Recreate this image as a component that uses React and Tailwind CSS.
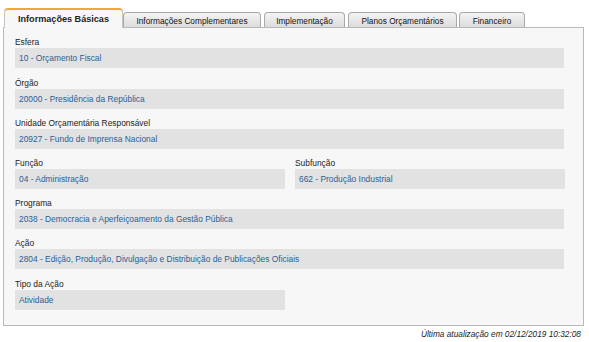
import React from 'react';

const tabs = [
  { label: 'Informações Complementares', w: 'w-[138px]', ml: 'ml-0' },
  { label: 'Implementação', w: 'w-[81px]', ml: 'ml-[3px]' },
  { label: 'Planos Orçamentários', w: 'w-[109px]', ml: 'ml-[3px]' },
  { label: 'Financeiro', w: 'w-[66px]', ml: 'ml-[2px]' },
];

// Campo: rótulo + valor em barra cinza
const Field = ({ label, value, lh = 'h-[20px]', half }) => (
  <div className={half ? 'w-[270px]' : 'w-[549px]'}>
    <div className={`${lh} flex items-end text-[8.4px] leading-[12px] text-[#222]`}>{label}</div>
    <div className="h-[20px] bg-[#e2e2e2] flex items-center px-[4px] text-[8.4px] text-[#2c5f94]">{value}</div>
  </div>
);

export default function App() {
  return (
    <div className="w-[589px] h-[342px] bg-white pt-[8px] px-[3px] font-['Liberation_Sans',Arial,sans-serif]">
      {/* Abas */}
      <div className="flex items-end h-[20px] relative z-10">
        <div className="w-[119px] h-[20px] ml-[1px] pt-[2px] border-t-2 border-x border-t-[#f0a835] border-x-[#c4c4c4] rounded-t-[4px] bg-[#f7f7f7] flex items-center justify-center text-[9.1px] font-bold text-[#222]">
          Informações Básicas
        </div>
        {tabs.map((t) => (
          <div
            key={t.label}
            className={`${t.w} ${t.ml} h-[15px] mb-px pt-[2px] border border-b-0 border-[#a9a9a9] rounded-t-[4px] bg-gradient-to-b from-[#f4f4f4] to-[#dcdcdc] flex items-center justify-center text-[8.3px] text-[#111]`}
          >
            {t.label}
          </div>
        ))}
      </div>

      {/* Painel */}
      <div className="w-[581px] h-[299px] -mt-px border border-[#b9b9b9] bg-[#f7f7f7] pl-[11px]">
        <Field label="Esfera" value="10 - Orçamento Fiscal" />
        <Field label="Órgão" value="20000 - Presidência da República" lh="h-[21px]" />
        <Field label="Unidade Orçamentária Responsável" value="20927 - Fundo de Imprensa Nacional" />
        <div className="flex gap-[10px]">
          <Field label="Função" value="04 - Administração" half />
          <Field label="Subfunção" value="662 - Produção Industrial" half />
        </div>
        <Field label="Programa" value="2038 - Democracia e Aperfeiçoamento da Gestão Pública" />
        <Field label="Ação" value="2804 - Edição, Produção, Divulgação e Distribuição de Publicações Oficiais" />
        <Field label="Tipo da Ação" value="Atividade" lh="h-[21px]" half />
      </div>

      <div className="flex justify-end pr-[5px] h-[17px] items-center text-[8.3px] italic text-[#222]">
        Última atualização em 02/12/2019 10:32:08
      </div>
    </div>
  );
}
